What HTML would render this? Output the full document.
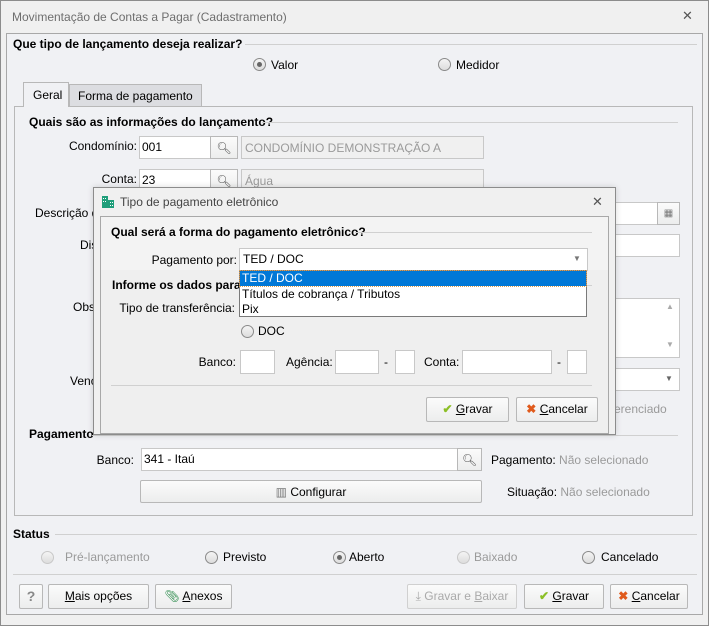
<!DOCTYPE html>
<html><head><meta charset="utf-8"><style>
*{box-sizing:border-box;margin:0;padding:0}
body{width:709px;height:626px;background:#f0f0f0;font-family:"Liberation Sans",sans-serif;font-size:12px;color:#000;position:relative;overflow:hidden}
.a{position:absolute;white-space:nowrap}
.b{font-weight:bold}
.g{color:#9a9a9a}
.in{position:absolute;background:#fff;border:1px solid #c8c8c8}
.ro{position:absolute;background:#f0f0f0;border:1px solid #c8c8c8;color:#9a9a9a;padding:4px 3px}
.btn{position:absolute;background:linear-gradient(#fbfbfb,#eceded);border:1px solid #b8b8b8;border-radius:2px;text-align:center;line-height:22px}
.line{position:absolute;height:1px;background:#d0d0d0}
.rad{position:absolute;width:13px;height:13px;border:1px solid #8a8a8a;border-radius:50%;background:linear-gradient(#f4f4f4,#ddd)}
.rad.on::after{content:"";position:absolute;left:3px;top:3px;width:5px;height:5px;border-radius:50%;background:#666}
.rad.dis{border-color:#c8c8c8}
.lbl{position:absolute;text-align:right;white-space:nowrap}
</style></head><body>
<div class="a" style="left:0;top:0;width:709px;height:626px;border:1px solid #8c8c8c;background:#f0f0f0"></div>
<div class="a" style="left:12px;top:10px;color:#6e6e6e">Movimentação de Contas a Pagar (Cadastramento)</div>
<div class="a" style="left:682px;top:8px;color:#555;font-size:13px">✕</div>
<div class="a" style="left:6px;top:33px;width:697px;height:582px;border:1px solid #a8a8a8;background:#f0f1f4"></div>

<div class="a b" style="left:13px;top:37px">Que tipo de lançamento deseja realizar?</div>
<div class="line" style="left:245px;top:44px;width:452px"></div>
<div class="rad on" style="left:253px;top:58px"></div><div class="a" style="left:271px;top:58px">Valor</div>
<div class="rad" style="left:438px;top:58px"></div><div class="a" style="left:456px;top:58px">Medidor</div>

<div class="a" style="left:14px;top:106px;width:679px;height:410px;border:1px solid #b8b8b8;background:#f0f1f4"></div>
<div class="a" style="left:23px;top:82px;width:46px;height:25px;border:1px solid #b8b8b8;border-bottom:none;background:#f0f1f4;padding:5px 0 0 9px">Geral</div>
<div class="a" style="left:69px;top:84px;width:133px;height:22px;border:1px solid #b8b8b8;border-bottom:none;background:#dcdde1;padding:4px 0 0 8px">Forma de pagamento</div>

<div class="a b" style="left:29px;top:115px">Quais são as informações do lançamento?</div>
<div class="line" style="left:262px;top:122px;width:416px"></div>
<div class="lbl" style="left:40px;width:97px;top:139px">Condomínio:</div>
<div class="in" style="left:139px;top:136px;width:72px;height:23px;padding:3px 2px">001</div>
<div class="btn" style="left:210px;top:136px;width:28px;height:23px;border-radius:0;color:#555">🔍︎</div>
<div class="ro" style="left:241px;top:136px;width:243px;height:23px">CONDOMÍNIO DEMONSTRAÇÃO A</div>
<div class="lbl" style="left:40px;width:97px;top:172px">Conta:</div>
<div class="in" style="left:139px;top:169px;width:72px;height:23px;padding:3px 2px">23</div>
<div class="btn" style="left:210px;top:169px;width:28px;height:23px;border-radius:0;color:#555">🔍︎</div>
<div class="ro" style="left:241px;top:169px;width:243px;height:23px">Água</div>
<div class="a" style="left:35px;top:206px">Descrição d</div>
<div class="in" style="left:600px;top:202px;width:58px;height:23px"></div>
<div class="btn" style="left:657px;top:202px;width:23px;height:23px;border-radius:0;font-size:10px;color:#777">▦</div>
<div class="a" style="left:80px;top:238px">Dis</div>
<div class="in" style="left:600px;top:234px;width:80px;height:23px"></div>
<div class="a" style="left:73px;top:300px">Obs</div>
<div class="in" style="left:600px;top:298px;width:80px;height:60px"></div>
<div class="a" style="left:666px;top:302px;font-size:8px;color:#aaa">▲</div>
<div class="a" style="left:666px;top:340px;font-size:8px;color:#aaa">▼</div>
<div class="a" style="left:70px;top:374px">Venc</div>
<div class="in" style="left:600px;top:368px;width:80px;height:23px"></div>
<div class="a" style="left:665px;top:374px;font-size:8px;color:#666">▼</div>
<div class="a g" style="left:600px;top:402px">referenciado</div>

<div class="a b" style="left:29px;top:427px">Pagamento</div>
<div class="line" style="left:92px;top:435px;width:586px"></div>
<div class="lbl" style="left:60px;width:74px;top:453px">Banco:</div>
<div class="in" style="left:141px;top:448px;width:317px;height:23px;padding:3px 2px">341 - Itaú</div>
<div class="btn" style="left:457px;top:448px;width:25px;height:23px;border-radius:0;color:#555">🔍︎</div>
<div class="a" style="left:491px;top:453px">Pagamento: <span class="g">Não selecionado</span></div>
<div class="btn" style="left:140px;top:480px;width:342px;height:23px"><span style="color:#777">▥</span> Configurar</div>
<div class="a" style="left:507px;top:485px">Situação: <span class="g">Não selecionado</span></div>

<div class="a b" style="left:13px;top:527px">Status</div>
<div class="line" style="left:55px;top:534px;width:642px"></div>
<div class="rad dis" style="left:41px;top:551px"></div><div class="a g" style="left:65px;top:550px">Pré-lançamento</div>
<div class="rad" style="left:205px;top:551px"></div><div class="a" style="left:223px;top:550px">Previsto</div>
<div class="rad on" style="left:333px;top:551px"></div><div class="a" style="left:349px;top:550px">Aberto</div>
<div class="rad dis" style="left:457px;top:551px"></div><div class="a g" style="left:474px;top:550px">Baixado</div>
<div class="rad" style="left:582px;top:551px"></div><div class="a" style="left:601px;top:550px">Cancelado</div>
<div class="line" style="left:13px;top:574px;width:684px"></div>

<div class="btn" style="left:19px;top:584px;width:24px;height:25px;color:#888;font-weight:bold;font-size:14px">?</div>
<div class="btn" style="left:48px;top:584px;width:101px;height:25px"><u>M</u>ais opções</div>
<div class="btn" style="left:155px;top:584px;width:77px;height:25px"><span style="color:#2a8a4a">📎︎</span> <u>A</u>nexos</div>
<div class="btn" style="left:407px;top:584px;width:110px;height:25px;color:#aaa;border-color:#d0d0d0">⤓ Gravar e <u>B</u>aixar</div>
<div class="btn" style="left:524px;top:584px;width:80px;height:25px"><span style="color:#8cbf26;font-weight:bold">✔</span> <u>G</u>ravar</div>
<div class="btn" style="left:610px;top:584px;width:78px;height:25px"><span style="color:#e05a1c;font-weight:bold">✖</span> <u>C</u>ancelar</div>

<!-- dialog -->
<div class="a" style="left:93px;top:187px;width:523px;height:248px;border:1px solid #8c8c8c;background:#f0f0f0;box-shadow:0 0 6px rgba(0,0,0,.15)"></div>
<svg class="a" style="left:101px;top:195px" width="14" height="14"><rect x="1" y="1" width="6" height="12" fill="#1f9e7a"/><rect x="7" y="5" width="6" height="8" fill="#1f9e7a"/><g fill="#fff"><rect x="2" y="3" width="1" height="1"/><rect x="4" y="3" width="1" height="1"/><rect x="2" y="6" width="1" height="1"/><rect x="4" y="6" width="1" height="1"/><rect x="9" y="7" width="1" height="1"/><rect x="11" y="7" width="1" height="1"/><rect x="9" y="10" width="1" height="1"/><rect x="11" y="10" width="1" height="1"/></g></svg>
<div class="a" style="left:120px;top:195px;color:#444">Tipo de pagamento eletrônico</div>
<div class="a" style="left:592px;top:194px;color:#555;font-size:13px">✕</div>
<div class="a" style="left:100px;top:216px;width:509px;height:218px;border:1px solid #a8a8a8;background:#efefef"></div>
<div class="a" style="left:101px;top:217px;width:507px;height:53px;background:#f3f3f3"></div>
<div class="a b" style="left:111px;top:225px">Qual será a forma do pagamento eletrônico?</div>
<div class="line" style="left:355px;top:232px;width:237px"></div>
<div class="lbl" style="left:120px;width:117px;top:253px">Pagamento por:</div>
<div class="in" style="left:239px;top:248px;width:349px;height:23px;padding:3px 3px">TED / DOC</div>
<div class="a" style="left:573px;top:254px;font-size:8px;color:#777">▼</div>
<div class="a b" style="left:112px;top:278px">Informe os dados para t</div>
<div class="line" style="left:560px;top:285px;width:32px"></div>
<div class="lbl" style="left:110px;width:125px;top:301px">Tipo de transferência:</div>
<div class="rad" style="left:241px;top:325px"></div><div class="a" style="left:258px;top:324px">DOC</div>
<div class="lbl" style="left:180px;width:56px;top:355px">Banco:</div>
<div class="in" style="left:240px;top:350px;width:35px;height:24px"></div>
<div class="a" style="left:286px;top:355px">Agência:</div>
<div class="in" style="left:335px;top:350px;width:44px;height:24px"></div>
<div class="a" style="left:384px;top:355px">-</div>
<div class="in" style="left:395px;top:350px;width:20px;height:24px"></div>
<div class="a" style="left:424px;top:355px">Conta:</div>
<div class="in" style="left:462px;top:350px;width:90px;height:24px"></div>
<div class="a" style="left:557px;top:355px">-</div>
<div class="in" style="left:567px;top:350px;width:20px;height:24px"></div>
<div class="line" style="left:111px;top:385px;width:481px"></div>
<div class="btn" style="left:426px;top:397px;width:83px;height:25px"><span style="color:#8cbf26;font-weight:bold">✔</span> <u>G</u>ravar</div>
<div class="btn" style="left:516px;top:397px;width:82px;height:25px"><span style="color:#e05a1c;font-weight:bold">✖</span> <u>C</u>ancelar</div>
<!-- dropdown list -->
<div class="a" style="left:239px;top:270px;width:348px;height:47px;border:1px solid #7a7a7a;background:#fff"></div>
<div class="a" style="left:240px;top:271px;width:346px;height:15px;background:#0078d7;outline:1px dotted #e0a050;color:#fff;padding:0 2px;line-height:15px">TED / DOC</div>
<div class="a" style="left:242px;top:287px;line-height:15px">Títulos de cobrança / Tributos</div>
<div class="a" style="left:242px;top:302px;line-height:15px">Pix</div>
</body></html>
